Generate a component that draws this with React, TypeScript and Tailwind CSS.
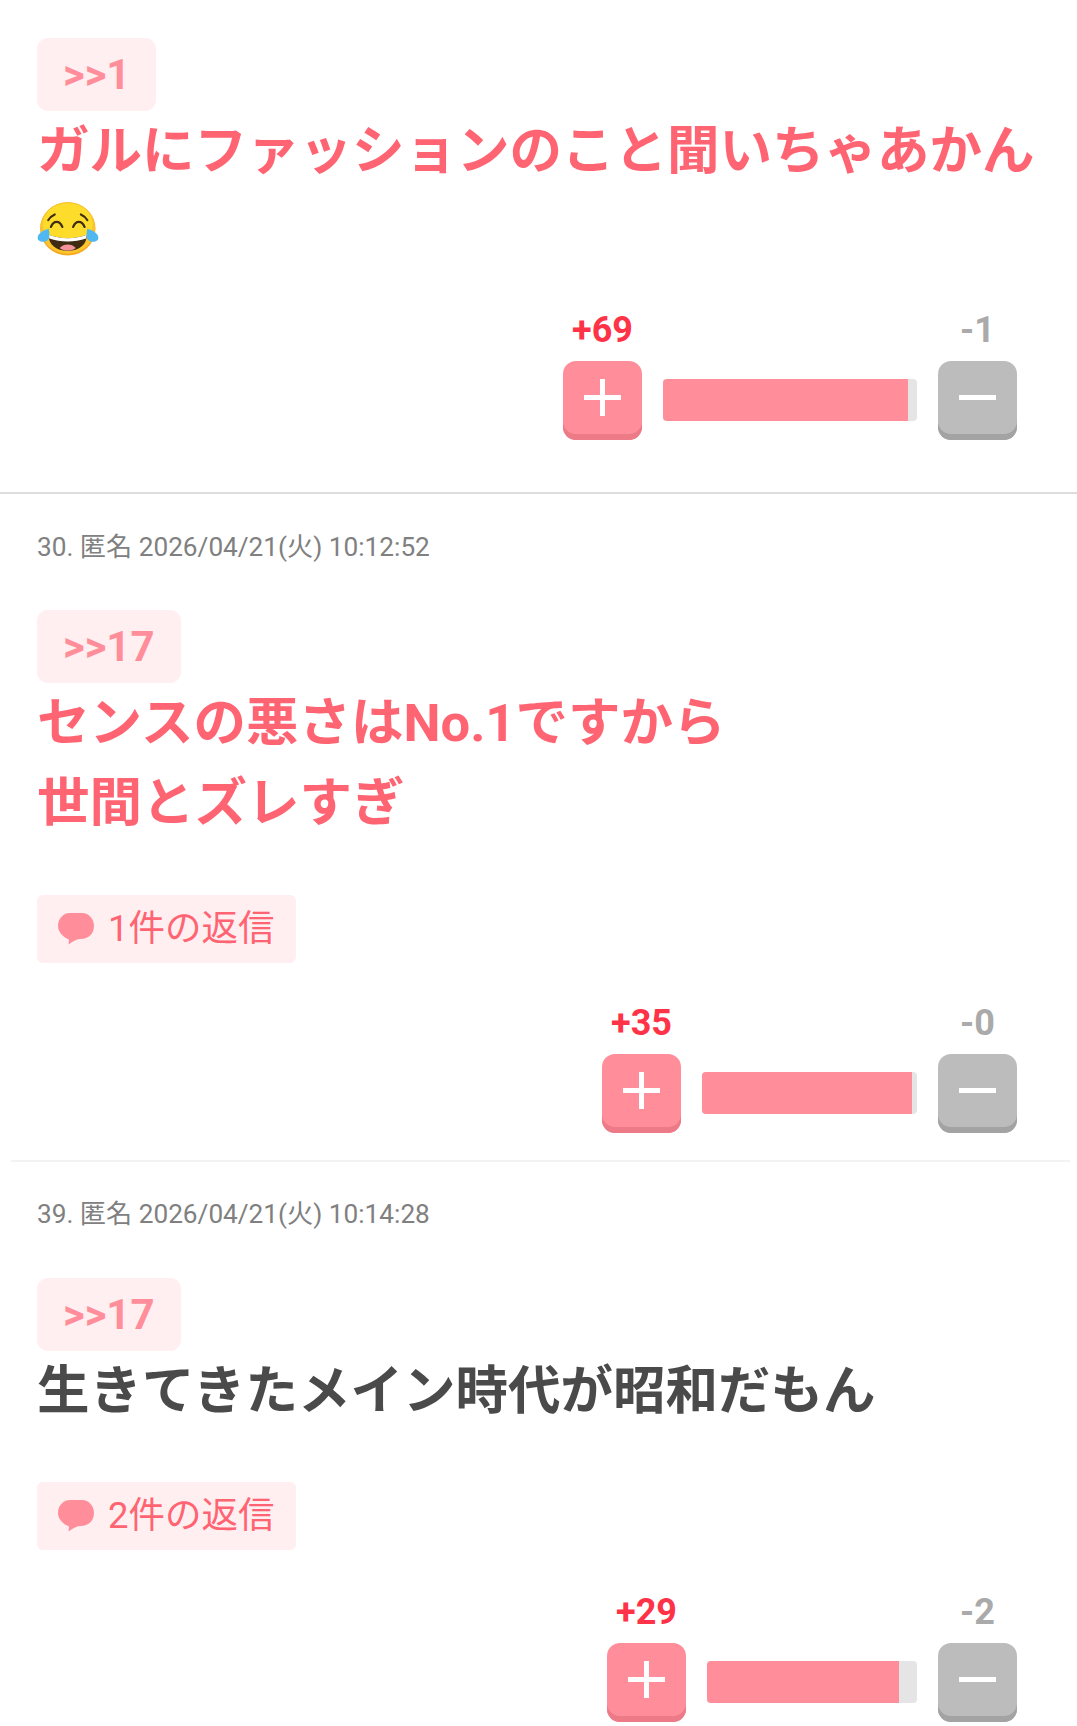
const font = { fontFamily: '"Roboto", "Noto Sans CJK JP", sans-serif' };

const LaughEmoji = () => (
  <svg width="62" height="54" viewBox="0 0 60 52" className="mb-[4px] block">
    <ellipse cx="29.8" cy="25.8" rx="26.8" ry="25.8" fill="#f5a623" />
    <ellipse cx="29.8" cy="25" rx="26.4" ry="25" fill="#fcc52b" />
    <ellipse cx="29.8" cy="21" rx="24" ry="20" fill="#fedc2c" />
    <path d="M13.5 24c2.5-6.5 8.5-6.5 11 0M35 24c2.5-6.5 8.5-6.5 11 0" fill="none" stroke="#3f2d10" strokeWidth="2.2" strokeLinecap="round" />
    <path d="M10.8 17.5c1.5-2.5 3.8-4.5 6.4-5.6M48.8 17.5c-1.5-2.5-3.8-4.5-6.4-5.6" fill="none" stroke="#3f2d10" strokeWidth="2" strokeLinecap="round" />
    <path d="M11.3 31.5c11 4.5 26 4.5 36.8 0c.5 9-7 15.6-18.4 15.6S10.8 40.500 11.300 31.500z" fill="#3f2a12" />
    <path d="M11.300 31.500c11 4.500 26 4.500 36.800 0l-.6 3.800c-11 3.800-24.600 3.800-35.600 0z" fill="#fff" />
    <path d="M22 44.300c4-4.300 11.500-4.300 15.500 0c-4 3.400-11.500 3.400-15.500 0z" fill="#f2929a" />
    <path d="M11.300 25.800c.8 3.500 1.200 7.500-.4 10.300c-2 2.900-7.900 3.200-10-.3c-1.400-3.800 3.500-8.200 10.400-10z" fill="#4fb8f0" />
    <path d="M48.700 25.800c-.8 3.500-1.200 7.500.4 10.300c2 2.900 7.900 3.200 10-.3c1.400-3.800-3.500-8.200-10.400-10z" fill="#4fb8f0" />
  </svg>
);

const BubbleIcon = () => (
  <svg width="36" height="32" viewBox="0 0 36 32" className="shrink-0">
    <path d="M12 0h12c7 0 12 6 12 13c0 8-6 13-13 13c-4 0-8 2-12.500 5.500l.5-5C5 24 0 19 0 13C0 6 5 0 12 0z" fill="#ff8e9a" />
  </svg>
);

const RefBadge = ({ label }: { label: string }) => (
  <div className="inline-flex h-[73px] items-center rounded-[11px] bg-[#ffeff1] px-[26px] text-[42px] font-bold text-[#ff8e9a]">
    {label}
  </div>
);

const ReplyBadge = ({ label }: { label: string }) => (
  <div className="flex h-[68px] w-[259px] items-center gap-[14px] rounded-[6px] bg-[#ffeff1] pl-[21px] text-[36.5px] text-[#ff6473]">
    <BubbleIcon />
    <span>{label}</span>
  </div>
);

interface VoteProps {
  plus: number;
  minus: number;
  barWidth: number;
  fillWidth: number;
}

const VoteBar = ({ plus, minus, barWidth, fillWidth }: VoteProps) => (
  <div className="flex justify-end gap-[21px] pr-[60px]">
    <div className="flex w-[79px] flex-col items-center">
      <div className="h-[57px] text-[36px] leading-[52px] font-bold whitespace-nowrap text-[#ff3347]">+{plus}</div>
      <button className="relative h-[79px] w-[79px] rounded-[13px] bg-[#ff8e9a] shadow-[inset_0_-6px_0_#ec7a87]">
        <span className="absolute top-[34px] left-[21px] h-[5px] w-[37px] bg-white" />
        <span className="absolute top-[18px] left-[37px] h-[37px] w-[5px] bg-white" />
      </button>
    </div>
    <div
      className="mt-[75px] h-[42px] overflow-hidden rounded-[4px] bg-[#e5e5e5]"
      style={{ width: barWidth }}
    >
      <div className="h-full bg-[#ff8e9a]" style={{ width: fillWidth }} />
    </div>
    <div className="flex w-[79px] flex-col items-center">
      <div className="h-[57px] text-[36px] leading-[52px] font-bold text-[#aaaaaa]">-{minus}</div>
      <button className="relative h-[79px] w-[79px] rounded-[13px] bg-[#bcbcbc] shadow-[inset_0_-6px_0_#a3a3a3]">
        <span className="absolute top-[34px] left-[21px] h-[5px] w-[37px] bg-white" />
      </button>
    </div>
  </div>
);

const Meta = ({ children }: { children: string }) => (
  <div className="h-[36px] text-[26.2px] leading-[36px] text-[#808080]">{children}</div>
);

export default function App() {
  return (
    <div className="h-[1726px] overflow-hidden bg-white" style={font}>
      <section className="px-[37px] pt-[38px]">
        <RefBadge label=">>1" />
        <div className="text-[52.5px] leading-[80px] font-bold text-[#ff6473]">
          ガルにファッションのこと聞いちゃあかん
          <div className="flex h-[80px] items-center"><LaughEmoji /></div>
        </div>
      </section>
      <div className="mt-[33px]"><VoteBar plus={69} minus={1} barWidth={254} fillWidth={245} /></div>
      <div className="mt-[52px] h-[2px] bg-[#dddddd]" />

      <section className="px-[37px] pt-[35px]">
        <Meta>30. 匿名 2026/04/21(火) 10:12:52</Meta>
        <div className="mt-[45px]"><RefBadge label=">>17" /></div>
        <div className="text-[52.5px] leading-[80px] font-bold text-[#ff6473]">
          センスの悪さはNo.1ですから
          <br />
          世間とズレすぎ
        </div>
        <div className="mt-[52px]"><ReplyBadge label="1件の返信" /></div>
      </section>
      <div className="mt-[34px]"><VoteBar plus={35} minus={0} barWidth={215} fillWidth={210} /></div>
      <div className="mt-[27px] mr-[7px] ml-[11px] h-[2px] bg-[#f3f3f3]" />

      <section className="px-[37px] pt-[34px]">
        <Meta>39. 匿名 2026/04/21(火) 10:14:28</Meta>
        <div className="mt-[46px]"><RefBadge label=">>17" /></div>
        <div className="text-[52.5px] leading-[80px] font-bold text-[#4a4a4a]">生きてきたメイン時代が昭和だもん</div>
        <div className="mt-[51px]"><ReplyBadge label="2件の返信" /></div>
      </section>
      <div className="mt-[36px]"><VoteBar plus={29} minus={2} barWidth={210} fillWidth={192} /></div>
    </div>
  );
}
